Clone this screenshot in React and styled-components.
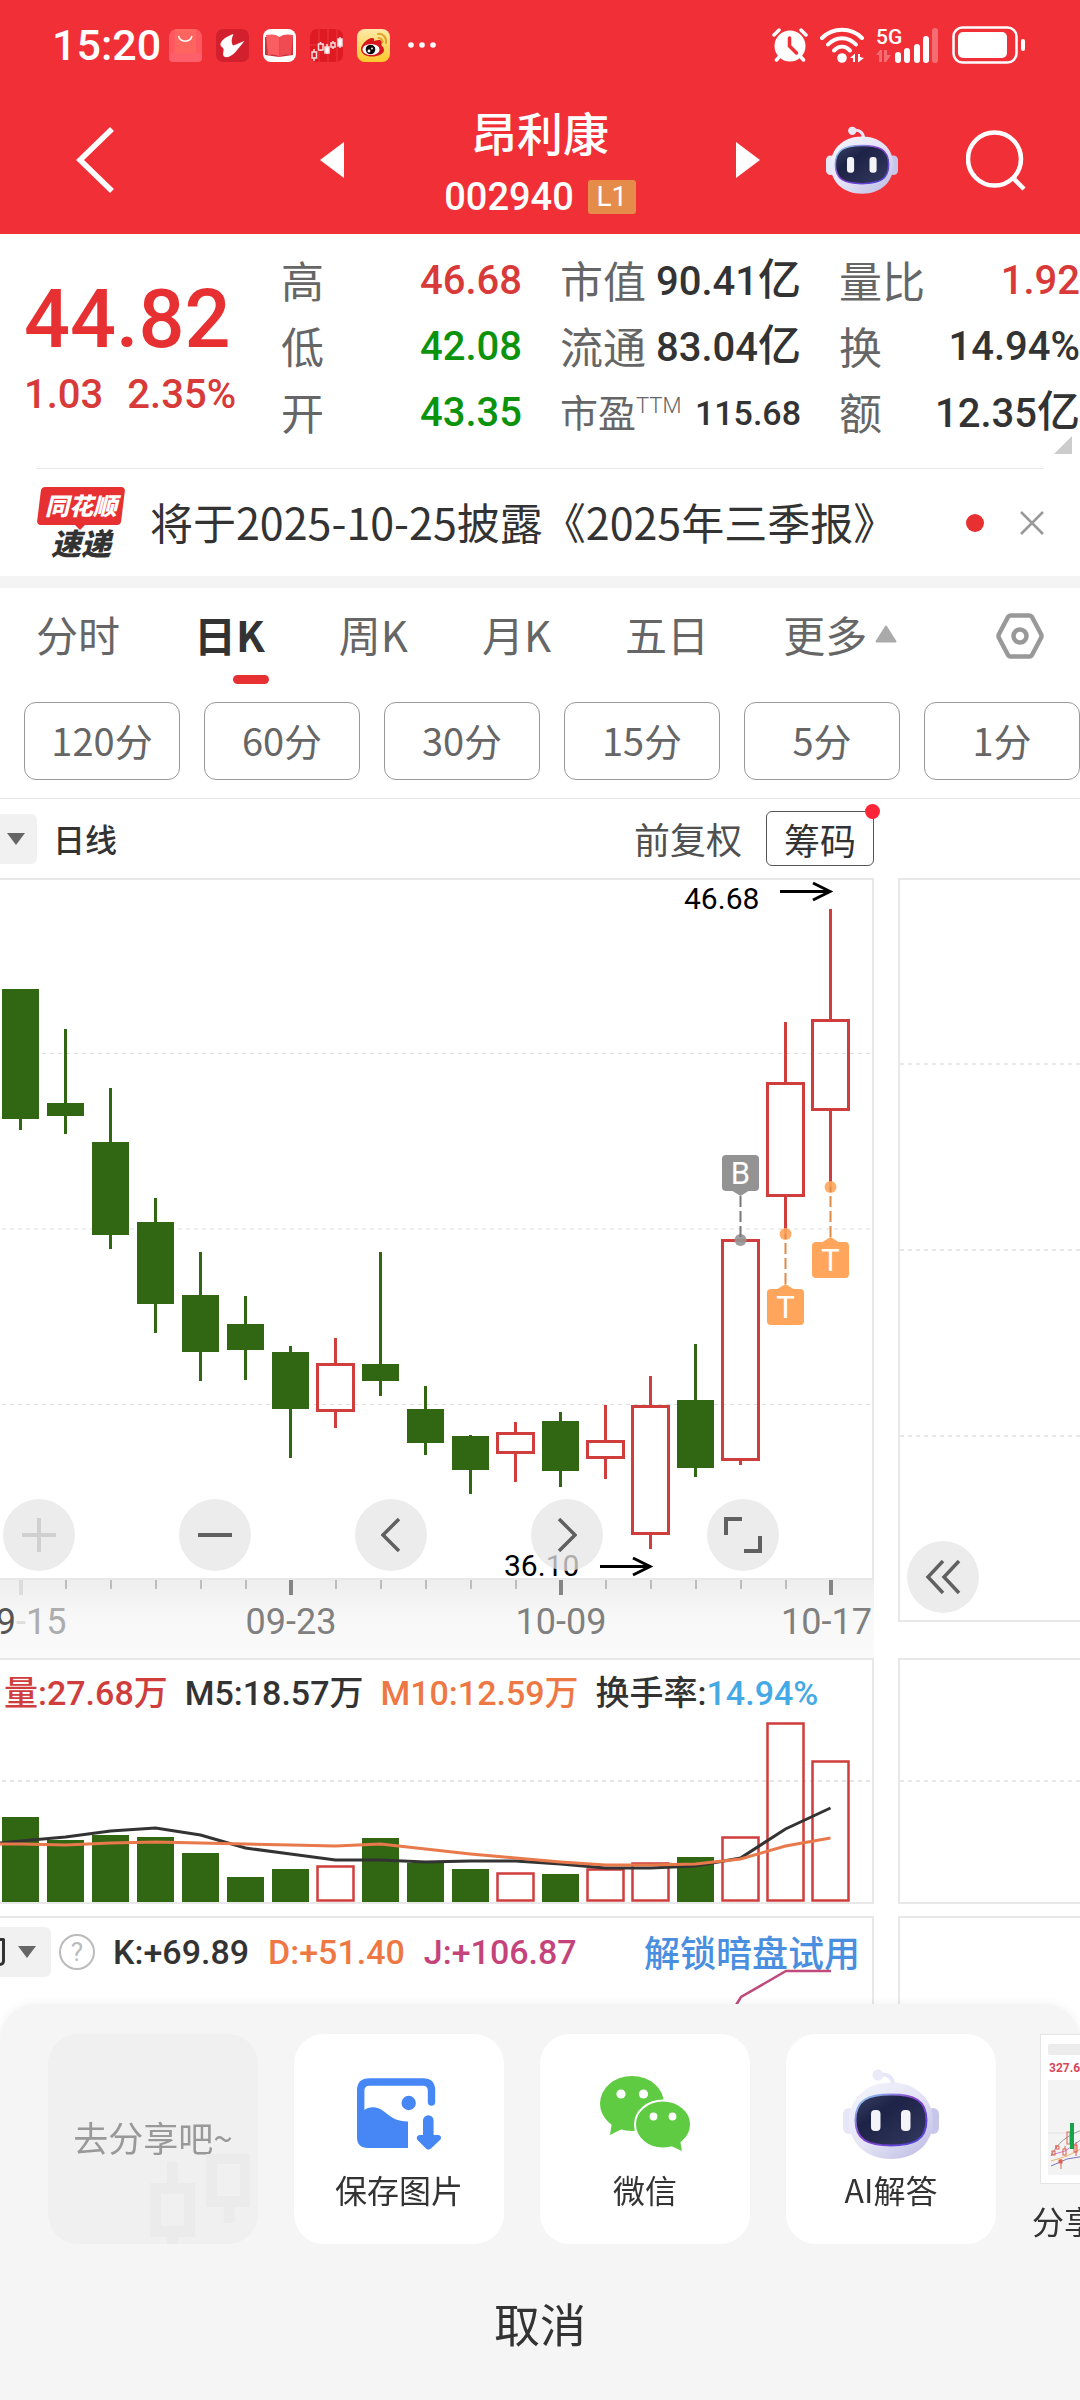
import React, { useState } from "react";
import styled, { createGlobalStyle } from "styled-components";

const CJK = `"Noto Sans CJK SC", "Noto Sans", sans-serif`;
const NUM = `Roboto, "Noto Sans CJK SC", sans-serif`;

const GREEN = "#316613";
const RED = "#cf3d3c";

// one entry per trading day: high, body top, body bottom, low (chart units)
const candles = [
  [110, 110, 240, 251],
  [150, 224, 237, 255],
  [209, 263, 356, 370],
  [319, 343, 425, 454],
  [373, 416, 473, 502],
  [417, 445, 471, 501],
  [467, 473, 530, 579],
  [459, 484, 533, 549, true],
  [373, 485, 502, 517],
  [507, 530, 564, 576],
  [556, 557, 591, 615],
  [543, 553, 575, 603, true],
  [533, 542, 592, 608],
  [526, 561, 580, 600, true],
  [497, 526, 656, 670, true],
  [465, 521, 589, 598],
  [360, 360, 582, 586, true],
  [143, 203, 318, 355, true],
  [30, 140, 232, 308, true],
];

const volumes = [
  99, 122, 117, 119, 135, 159, 151, 147, 120, 145, 151, 154, 156, 150, 144, 139,
  118, 4, 42,
];
const m5 = [
  123, 119, 113, 110, 117, 130, 136, 142, 142, 144, 143, 143, 146, 150, 150,
  148, 140, 111, 90,
];
const m10 = [
  126, 127, 125, 124, 125, 126, 127, 128, 126, 131, 136, 140, 144, 147, 147,
  146, 141, 128, 120,
];

const quotes = [
  [
    { label: "高", value: "46.68", color: "#d83a3a" },
    { label: "低", value: "42.08", color: "#0c930c" },
    { label: "开", value: "43.35", color: "#0c930c" },
  ],
  [
    { label: "市值", value: "90.41", unit: "亿" },
    { label: "流通", value: "83.04", unit: "亿" },
    { label: "市盈", sup: "TTM", value: "115.68", small: true },
  ],
  [
    { label: "量比", value: "1.92", color: "#d83a3a" },
    { label: "换", value: "14.94%" },
    { label: "额", value: "12.35", unit: "亿" },
  ],
];

const tabs = ["分时", "日K", "周K", "月K", "五日", "更多"];
const minutes = ["120分", "60分", "30分", "15分", "5分", "1分"];

const centerX = (i) => 20.5 + i * 45;

/* ---------- icons ---------- */

const Robot = ({ width, height, id }) => (
  <svg width={width} height={height} viewBox="0 0 96 90">
    <defs>
      <linearGradient id={`${id}-head`} x1="0" y1="0" x2="1" y2="1">
        <stop offset="0" stopColor="#f6f6fd" />
        <stop offset="0.5" stopColor="#e4e4f6" />
        <stop offset="1" stopColor="#b9b8e2" />
      </linearGradient>
      <linearGradient id={`${id}-rim`} x1="0" y1="0" x2="1" y2="1">
        <stop offset="0" stopColor="#8fe0f5" />
        <stop offset="0.45" stopColor="#8a3fd0" />
        <stop offset="1" stopColor="#4a48d8" />
      </linearGradient>
      <linearGradient id={`${id}-face`} x1="0" y1="0" x2="1" y2="1">
        <stop offset="0" stopColor="#3a4066" />
        <stop offset="0.35" stopColor="#1d2346" />
        <stop offset="1" stopColor="#34395f" />
      </linearGradient>
    </defs>
    <path
      d="M36 6 C44 4 50 8 50 16"
      fill="none"
      stroke="#e6e6f7"
      strokeWidth="4"
    />
    <circle cx="35" cy="6" r="5.5" fill="#e9e9f8" />
    <rect x="0" y="39" width="12" height="26" rx="6" fill="#e6e6f6" />
    <rect x="84" y="39" width="12" height="26" rx="6" fill="#c6c6ea" />
    <path
      d="M48 13.500C74 13.500 90 31 90 52S74 90 48 90S6 73 6 52S22 13.500 48 13.500Z"
      fill={`url(#${id}-head)`}
    />
    <path
      d="M12.500 51C12.500 31 25 25.500 48 25.500S83.500 31 83.500 51S71 76.500 48 76.500S12.500 71 12.500 51Z"
      fill={`url(#${id}-face)`}
      stroke={`url(#${id}-rim)`}
      strokeWidth="2"
    />
    <rect x="28" y="41" width="9.500" height="21" rx="4" fill="#f3f3f8" />
    <rect x="58" y="41" width="9.500" height="21" rx="4" fill="#f3f3f8" />
  </svg>
);

const BagIcon = () => (
  <svg width="33" height="33" viewBox="0 0 33 33">
    <rect width="33" height="33" rx="8" fill="#fe5961" />
    <rect x="6" width="21" height="24" fill="#ff655f" />
    <rect y="24" width="33" height="9" rx="4" fill="#ff5f6b" />
    <path d="M9.500 7a7 7 0 0 0 13.500 0" fill="none" stroke="#fff" strokeWidth="1.500" />
  </svg>
);

const BirdIcon = () => (
  <svg width="33" height="33" viewBox="0 0 33 33">
    <rect width="33" height="33" rx="7" fill="#d3202e" />
    <path
      d="M17.500 5C12 7 6 10 4.500 14.500c-.5 3.500 2.500 3.500 3 5.500.5 3-1.500 5 .5 7.500 4 2 8-1 11.500-4.500L28.500 12c-4 1-7 3.500-11.500 4.500-2-3.500-1.500-7 .5-11.500z"
      fill="#fff"
    />
  </svg>
);

const BookIcon = () => (
  <svg width="33" height="33" viewBox="0 0 33 33">
    <rect width="33" height="33" rx="8" fill="#fff" />
    <path d="M2 8v18l14 2 14-2V8z" fill="#c9333c" />
    <path d="M3 6c5-1 10-1 13.500 2v20C13 25 9 25 5 26z" fill="#fa5d62" />
    <path d="M30 6c-5-1-10-1-13.500 2v20C20 25 24 25 28 26z" fill="#f04b53" />
  </svg>
);

const StockIcon = () => (
  <svg width="33" height="33" viewBox="0 0 33 33">
    <rect width="33" height="33" rx="7" fill="#df1a22" />
    <path d="M9 0v33M18 0v33M27 0v33M0 16h33" stroke="#e8383f" strokeWidth="1" />
    <g fill="none" stroke="#f8dede" strokeWidth="1.500">
      <path d="M4 20v12M10.500 13v9M17 15v10M23 12v8M30 8v11" />
      <rect x="2" y="23" width="4.500" height="6" fill="#df1a22" />
      <rect x="8.500" y="15" width="4.500" height="6" fill="#df1a22" />
      <rect x="15" y="18" width="4" height="6" fill="#fff" />
      <rect x="21" y="14" width="4" height="4" fill="#df1a22" />
      <rect x="28" y="10" width="4" height="7" fill="#fff" />
    </g>
  </svg>
);

const WeiboIcon = () => (
  <svg width="33" height="33" viewBox="0 0 33 33">
    <defs>
      <linearGradient id="weibo-bg" x1="0" y1="0" x2="0" y2="1">
        <stop offset="0" stopColor="#fdeaa9" />
        <stop offset="1" stopColor="#fbc92c" />
      </linearGradient>
    </defs>
    <rect width="33" height="33" rx="8" fill="url(#weibo-bg)" />
    <path
      d="M4 20c0-5 8-12 12-11 2 1 1 3 1 3s7-3 8 1c0 2-1 3-1 3s3 2 3 5c0 4-6 6.500-12 6.500S4 25 4 20z"
      fill="#d8161c"
    />
    <ellipse cx="14" cy="20.500" rx="8.500" ry="5.500" fill="#fff" />
    <circle cx="13.500" cy="20.500" r="4.800" fill="#0c0c0c" />
    <circle cx="12" cy="22" r="1.400" fill="#fff" />
    <circle cx="15" cy="19.500" r="0.900" fill="#fff" />
    <path
      d="M21 5c5-1 9 4 8 9M21.500 9c2.500 0 4.500 2 4 4.500"
      fill="none"
      stroke="#e0a32a"
      strokeWidth="2"
      strokeLinecap="round"
    />
  </svg>
);

const AlarmIcon = () => (
  <svg width="36" height="34" viewBox="0 0 36 34">
    <g stroke="#fff" strokeWidth="3.500" strokeLinecap="round">
      <path d="M2 7l5-5M34 7l-5-5M8 28l-3.500 4M28 28l3.500 4" />
    </g>
    <circle cx="18" cy="18" r="15.500" fill="#fff" />
    <path
      d="M17.500 10v8l7 7"
      fill="none"
      stroke="#f12f37"
      strokeWidth="3.500"
      strokeLinecap="round"
    />
  </svg>
);

const WifiIcon = () => (
  <svg width="44" height="36" viewBox="0 0 44 36">
    <g fill="none" stroke="#fff" strokeWidth="4" strokeLinecap="round">
      <path d="M2 11C13 0 31 0 42 11" />
      <path d="M8 17.500C16 9 28 9 36 17.500" />
      <path d="M14 23.500c5-5 11-5 16 0" />
    </g>
    <circle cx="22" cy="31" r="4.800" fill="#fff" />
    <path d="M30 31l5-4.500V35h-2v-4zM44 31l-6 4.500V27h2v3z" fill="#fff" />
  </svg>
);

const SignalIcon = () => (
  <svg width="64" height="44" viewBox="0 -4 64 44">
    <text x="0" y="17" fontFamily="Roboto" fontWeight="500" fontSize="21" fill="#fff">
      5G
    </text>
    <path
      d="M0 28l4-5h2v12H3v-7zM15 28l-5 7H8V23h3v5z"
      fill="#fff"
      fillOpacity="0.3"
    />
    <g fill="#fff">
      <rect x="19" y="25" width="6" height="11" rx="3" />
      <rect x="28" y="21" width="6" height="15" rx="3" />
      <rect x="38" y="17" width="6" height="19" rx="3" />
      <rect x="47" y="9" width="6" height="27" rx="3" />
      <rect x="56" y="1" width="6" height="35" rx="3" fillOpacity="0.3" />
    </g>
  </svg>
);

const BatteryIcon = () => (
  <svg width="74" height="38" viewBox="0 0 74 38">
    <rect x="1.500" y="1.500" width="63" height="35" rx="9" fill="none" stroke="#fff" strokeWidth="2.500" />
    <rect x="6" y="6" width="49" height="26" rx="5" fill="#fff" />
    <rect x="69" y="13" width="4" height="12" rx="2" fill="#fff" />
  </svg>
);

const SaveIcon = () => (
  <svg width="84" height="72" viewBox="0 0 84 72">
    <path
      d="M74.500 24V12.500Q74.500 4 66 4H12.500Q3.700 4 3.700 12.500V40"
      fill="none"
      stroke="#4787f5"
      strokeWidth="7.400"
      strokeLinecap="round"
    />
    <path
      d="M0 30L7.400 32C12 28.500 20 28 27 33.500C35 40 40 43.500 51 43.500V70H11Q0 70 0 59Z"
      fill="#4787f5"
    />
    <circle cx="51.700" cy="25" r="7.200" fill="#4787f5" />
    <path
      d="M66 42.500a5.300 5.300 0 0 1 10.600 0V57H81c3 0 4 3 2 5L74 70.500c-2 1.500-3.500 1.500-5 0L60.500 62c-1.500-2-.5-5 2.500-5h3z"
      fill="#4787f5"
    />
  </svg>
);

const WechatIcon = () => (
  <svg width="91" height="76" viewBox="0 0 91 76">
    <ellipse cx="32" cy="27.500" rx="32" ry="27.500" fill="#5fcb43" />
    <path d="M12 46l-2 13 12-6z" fill="#5fcb43" />
    <circle cx="21" cy="18" r="4.600" fill="#fff" />
    <circle cx="43.500" cy="18" r="4.600" fill="#fff" />
    <ellipse cx="63" cy="48.500" rx="28" ry="24" fill="#5fcb43" stroke="#fff" strokeWidth="2" />
    <path d="M80 64l2 11-13-6z" fill="#5fcb43" />
    <circle cx="53.500" cy="40.500" r="3.900" fill="#fff" />
    <circle cx="72.500" cy="40.500" r="3.900" fill="#fff" />
  </svg>
);

const Thumbnail = () => (
  <svg width="114" height="150" viewBox="0 0 114 150">
    <rect x="0.500" y="0.500" width="113" height="149" fill="#fff" stroke="#e4e4e4" />
    <rect x="8" y="10" width="98" height="11" rx="2" fill="#ececec" />
    <text x="9" y="38" fontFamily="Roboto" fontWeight="700" fontSize="12" fill="#d8475a">
      327.61
    </text>
    <rect x="8" y="46" width="98" height="95" fill="#f3f3f3" />
    <path d="M8 99h98" stroke="#e2e2e2" />
    <path d="M11 122c6-12 15-21 34-27" fill="none" stroke="#999" />
    <path d="M11 121l14-4 20-14" fill="none" stroke="#c77fd0" />
    <path d="M11 127l16-5 18-9" fill="none" stroke="#eab66f" />
    <path d="M11 132l16-7 18-3" fill="none" stroke="#7a78b8" />
    <g fill="none" stroke="#e0604f">
      <path d="M16 111v3M25 112v3M21 125v10M36 108v14" />
      <rect x="12" y="117" width="3" height="4" />
      <rect x="16" y="112" width="3" height="3" />
      <rect x="23" y="115" width="3" height="6" />
      <rect x="27" y="98" width="3" height="12" />
      <rect x="34" y="111" width="3" height="7" />
      <rect x="19" y="126" width="3" height="3" fill="#e0604f" />
    </g>
    <path d="M32 89v26" stroke="#16a34a" strokeWidth="4" />
  </svg>
);

/* ---------- charts ---------- */

const Marker = ({ x, dotY, boxY, letter, color, line }) => {
  const below = boxY > dotY;
  const edge = below ? boxY : boxY + 36;
  const tip = below ? boxY - 5 : boxY + 41;
  return (
    <g>
      <circle cx={x} cy={dotY} r="6" fill={color} fillOpacity="0.9" />
      <path d={`M${x} ${tip}V${dotY}`} stroke={line} strokeWidth="2" strokeDasharray="11 4" />
      <path d={`M${x - 8} ${edge}L${x} ${tip}L${x + 8} ${edge}z`} fill={color} />
      <rect x={x - 18.5} y={boxY} width="37" height="36" rx="4" fill={color} />
      <text x={x} y={boxY + 29} textAnchor="middle" fontSize="31" fill="#fff">
        {letter}
      </text>
    </g>
  );
};

const PriceChart = () => (
  <ChartSvg viewBox="0 -1 874 780">
    <defs>
      <linearGradient id="axis-bg" x1="0" y1="0" x2="0" y2="1">
        <stop offset="0" stopColor="#eeeeee" />
        <stop offset="0.5" stopColor="#f8f8f8" />
        <stop offset="1" stopColor="#fafafa" />
      </linearGradient>
    </defs>
    <rect x="0" y="701" width="874" height="78" fill="url(#axis-bg)" />
    <path d="M0 0H873V700H0" fill="none" stroke="#e8e8e8" strokeWidth="2" />
    <path
      d="M2 174.500H872M2 350H872M2 525.500H872"
      stroke="#dedede"
      strokeWidth="1"
      strokeDasharray="4 4"
    />
    {candles.map(([high, top, bottom, low, up], i) => {
      const x = centerX(i);
      return up ? (
        <g key={i} fill="none" stroke={RED} strokeWidth="3">
          <path d={`M${x} ${high}V${top}M${x} ${bottom}V${low}`} />
          <rect x={x - 18} y={top + 1.5} width="36" height={bottom - top - 3} />
        </g>
      ) : (
        <g key={i} fill={GREEN}>
          <rect x={x - 1.5} y={high} width="3" height={low - high} />
          <rect x={x - 18.5} y={top} width="37" height={bottom - top} />
        </g>
      );
    })}
    <g fontFamily="Roboto" fill="#fff">
      <Marker x={740.5} dotY={361} boxY={276} letter="B" color="#939393" line="#777" />
      <Marker x={785.5} dotY={355} boxY={410} letter="T" color="#ffa65c" line="#e08a48" />
      <Marker x={830.5} dotY={308} boxY={363} letter="T" color="#ffa65c" line="#e08a48" />
    </g>
    <g fontFamily="Roboto" fontSize="30" fill="#000">
      <text x="684" y="30">46.68</text>
      <text x="504" y="697">36.10</text>
    </g>
    <g fill="none" stroke="#000" strokeWidth="3">
      <path d="M780 12.500H830M813 4L830 12.500L813 21" />
      <path d="M600 687.500H650M633 679L650 687.500L633 696" />
    </g>
    {candles.map((_, i) => (
      <rect
        key={i}
        x={centerX(i) - (i % 6 ? 0.5 : 1.5)}
        y="701"
        width={i % 6 ? 2 : 4}
        height={i % 6 ? 9 : 15}
        fill={i === 0 ? "#dcdcdc" : i % 6 ? "#bdbdbd" : "#858585"}
      />
    ))}
    <g fontFamily="Roboto" fontSize="36" fill="#808080" textAnchor="middle">
      <text x="21" y="755">
        <tspan fill="#555">09</tspan>
        <tspan fill="#dedede">-</tspan>
        <tspan fill="#adadad">15</tspan>
      </text>
      <text x="291" y="755">09-23</text>
      <text x="561" y="755">10-09</text>
      <text x="872" y="755" textAnchor="end">10-17</text>
    </g>
  </ChartSvg>
);

const linePoints = (values) => values.map((v, i) => `${centerX(i)},${v}`).join(" ");

const VolumeChart = () => (
  <ChartSvg viewBox="0 0 872 184">
    <path d="M2 63H872" stroke="#e4e4e4" strokeWidth="2" strokeDasharray="4 4" />
    {volumes.map((top, i) =>
      candles[i][4] ? (
        <rect
          key={i}
          x={centerX(i) - 18}
          y={top + 1.5}
          width="36"
          height={181 - top}
          fill="none"
          stroke={RED}
          strokeWidth="2.500"
        />
      ) : (
        <rect key={i} x={centerX(i) - 18.5} y={top} width="37" height={184 - top} fill={GREEN} />
      )
    )}
    <g fill="none" strokeWidth="3">
      <polyline points={`0,125 ${linePoints(m5)}`} stroke="#333" />
      <polyline points={`0,126 ${linePoints(m10)}`} stroke="#e8794a" />
    </g>
  </ChartSvg>
);

/* ---------- page ---------- */

const App = () => {
  const [active, setActive] = useState("日K");

  return (
    <Page>
      <GlobalStyle />
      <Header>
        <StatusBar>
          <Clock>15:20</Clock>
          <AppIcons>
            <BagIcon />
            <BirdIcon />
            <BookIcon />
            <StockIcon />
            <WeiboIcon />
          </AppIcons>
          <svg width="28" height="6" viewBox="0 0 28 6" fill="#fff">
            <circle cx="3" cy="3" r="2.800" />
            <circle cx="14" cy="3" r="2.800" />
            <circle cx="25" cy="3" r="2.800" />
          </svg>
          <SystemIcons>
            <AlarmIcon />
            <WifiIcon />
            <SignalIcon />
            <BatteryIcon />
          </SystemIcons>
        </StatusBar>
        <NavBar>
          <NavSide>
            <IconButton aria-label="返回">
              <svg width="40" height="66" viewBox="0 0 40 66">
                <path d="M36 2L4 33L36 64" fill="none" stroke="#fff" strokeWidth="5.500" />
              </svg>
            </IconButton>
          </NavSide>
          <Switcher>
            <IconButton aria-label="上一只">
              <svg width="24" height="36" viewBox="0 0 24 36">
                <path d="M24 0V36L0 18z" fill="#fff" />
              </svg>
            </IconButton>
            <Title>
              <h1>昂利康</h1>
              <Code>
                002940 <Level>L1</Level>
              </Code>
            </Title>
            <IconButton aria-label="下一只">
              <svg width="24" height="36" viewBox="0 0 24 36">
                <path d="M0 0V36L24 18z" fill="#fff" />
              </svg>
            </IconButton>
          </Switcher>
          <NavSide $end>
            <IconButton aria-label="AI">
              <Robot id="nav" width={72} height={68} />
            </IconButton>
            <IconButton aria-label="搜索">
              <svg width="60" height="62" viewBox="0 0 60 62" fill="none" stroke="#fff" strokeWidth="4.500">
                <circle cx="28.500" cy="30" r="26.500" />
                <path d="M47 49L58 60" />
              </svg>
            </IconButton>
          </NavSide>
        </NavBar>
      </Header>

      <Quote>
        <PriceBlock>
          <Price>44.82</Price>
          <Change>
            <span>1.03</span>
            <span>2.35%</span>
          </Change>
        </PriceBlock>
        {quotes.map((column, i) => (
          <div key={i}>
            {column.map((item) => (
              <QuoteRow key={item.label}>
                <QuoteLabel $small={item.small}>
                  {item.label}
                  {item.sup && <sup>{item.sup}</sup>}
                </QuoteLabel>
                <QuoteValue $color={item.color} $small={item.small}>
                  {item.value}
                  {item.unit && <em>{item.unit}</em>}
                </QuoteValue>
              </QuoteRow>
            ))}
          </div>
        ))}
        <Corner />
      </Quote>

      <News>
        <Brand>
          <BrandTag>同花顺</BrandTag>
          <BrandName>速递</BrandName>
        </Brand>
        <NewsText href="#report">将于2025-10-25披露《2025年三季报》</NewsText>
        <NewsDot />
        <IconButton aria-label="关闭">
          <svg width="24" height="24" viewBox="0 0 24 24">
            <path d="M1 1L23 23M23 1L1 23" stroke="#999" strokeWidth="2.500" />
          </svg>
        </IconButton>
      </News>

      <Tabs>
        {tabs.map((tab) => (
          <Tab key={tab} $active={tab === active} onClick={() => setActive(tab)}>
            {tab}
            {tab === "更多" && (
              <svg width="22" height="18" viewBox="0 0 22 18">
                <path d="M11 1.500L20.500 16.500H1.500z" fill="#aaa" stroke="#aaa" strokeWidth="2" strokeLinejoin="round" />
              </svg>
            )}
          </Tab>
        ))}
        <SettingsButton aria-label="设置">
          <svg width="48" height="46" viewBox="0 0 48 46" fill="none" stroke="#999" strokeWidth="4.500">
            <path
              d="M14.500 2.500H33.500Q35 2.500 36 4L45 21Q46 23 45 25L36 42Q35 43.500 33.500 43.500H14.500Q13 43.500 12 42L3 25Q2 23 3 21L12 4Q13 2.500 14.500 2.500Z"
              strokeLinejoin="round"
            />
            <circle cx="24" cy="23" r="6.500" />
          </svg>
        </SettingsButton>
      </Tabs>

      <Pills>
        {minutes.map((m) => (
          <Pill key={m}>{m}</Pill>
        ))}
      </Pills>

      <Columns>
        <Toolbar>
          <DropButton aria-label="主图指标">
            <svg width="18" height="12" viewBox="0 0 18 12">
              <path d="M0 0H18L9 12z" fill="#666" />
            </svg>
          </DropButton>
          <ToolName>日线</ToolName>
          <AdjustButton>前复权</AdjustButton>
          <ChipButton>筹码</ChipButton>
        </Toolbar>
      </Columns>

      <Columns>
        <Overlay>
          <PriceChart />
          <Controls>
            <RoundButton aria-label="放大" disabled>
              <svg width="34" height="34" viewBox="0 0 34 34" stroke="#d0d0d0" strokeWidth="4">
                <path d="M17 0V34M0 17H34" />
              </svg>
            </RoundButton>
            <RoundButton aria-label="缩小">
              <svg width="34" height="34" viewBox="0 0 34 34" stroke="#606060" strokeWidth="4">
                <path d="M0 17H34" />
              </svg>
            </RoundButton>
            <RoundButton aria-label="左移">
              <svg width="20" height="34" viewBox="0 0 20 34" fill="none" stroke="#606060" strokeWidth="3.500">
                <path d="M18 1L2 17L18 33" />
              </svg>
            </RoundButton>
            <RoundButton aria-label="右移">
              <svg width="20" height="34" viewBox="0 0 20 34" fill="none" stroke="#606060" strokeWidth="3.500">
                <path d="M2 1L18 17L2 33" />
              </svg>
            </RoundButton>
            <RoundButton aria-label="全屏">
              <svg width="38" height="38" viewBox="0 0 38 38" fill="none" stroke="#606060" strokeWidth="4">
                <path d="M2 19V3H18M36 20V35H20" />
              </svg>
            </RoundButton>
          </Controls>
        </Overlay>
        <SidePanel>
          <ChartSvg viewBox="0 0 180 740">
            <path
              d="M0 184H180M0 370H180M0 556H180"
              stroke="#e8e8e8"
              strokeWidth="2"
              strokeDasharray="4 4"
            />
          </ChartSvg>
          <ExpandButton aria-label="展开">
            <svg width="36" height="34" viewBox="0 0 36 34" fill="none" stroke="#606060" strokeWidth="3.500">
              <path d="M18 1L3 17L18 33M34 1L19 17L34 33" />
            </svg>
          </ExpandButton>
        </SidePanel>
      </Columns>

      <Columns $bottom={12}>
        <Panel>
          <Legend>
            <Stat $color="#cf3d3c">量:27.68万</Stat>
            <Stat>M5:18.57万</Stat>
            <Stat $color="#ee7844">M10:12.59万</Stat>
            <Stat>
              换手率:<Stat $color="#45a9e6">14.94%</Stat>
            </Stat>
          </Legend>
          <VolumeChart />
        </Panel>
        <Panel $side>
          <ChartSvg viewBox="0 0 180 242">
            <path d="M0 121H180" stroke="#e8e8e8" strokeWidth="2" strokeDasharray="4 4" />
          </ChartSvg>
        </Panel>
      </Columns>

      <Columns $grow>
        <Panel $open>
          <KdjRow>
            <DropButton $wide aria-label="副图指标">
              <NameEdge />
              <svg width="18" height="12" viewBox="0 0 18 12">
                <path d="M0 0H18L9 12z" fill="#666" />
              </svg>
            </DropButton>
            <Help aria-label="说明">?</Help>
            <Stat>K:+69.89</Stat>
            <Stat $color="#ee7844">D:+51.40</Stat>
            <Stat $color="#c5437b">J:+106.87</Stat>
            <Unlock href="#unlock">解锁暗盘试用</Unlock>
          </KdjRow>
          <KdjLine viewBox="0 0 872 100">
            <polyline points="733,92 741,79 786,53 831,53" fill="none" stroke="#bf4a7b" strokeWidth="2.500" />
          </KdjLine>
        </Panel>
        <Panel $side $open />
      </Columns>

      <Sheet>
        <ShareRow>
          <HintCard>
            去分享吧~
            <Watermark width="100" height="90" viewBox="0 0 100 90" fill="none" stroke="#ebebeb" strokeWidth="11">
              <rect x="5.500" y="34.500" width="34" height="43" />
              <path d="M22.500 8V29M22.500 83V90" />
              <rect x="61.500" y="4.500" width="34" height="43" />
              <path d="M79 53V69" />
            </Watermark>
          </HintCard>
          <Card>
            <IconSlot>
              <SaveIcon />
            </IconSlot>
            保存图片
          </Card>
          <Card>
            <IconSlot>
              <WechatIcon />
            </IconSlot>
            微信
          </Card>
          <Card>
            <IconSlot>
              <Robot id="share" width={96} height={90} />
            </IconSlot>
            AI解答
          </Card>
          <ThumbCard>
            <Thumbnail />
            分享
          </ThumbCard>
        </ShareRow>
        <Cancel>取消</Cancel>
      </Sheet>
    </Page>
  );
};

const GlobalStyle = createGlobalStyle`
  * {
    box-sizing: border-box;
  }
  body {
    margin: 0;
    background: #fff;
    font-family: ${CJK};
    color: #333;
    overflow-x: hidden;
  }
  h1 {
    margin: 0;
  }
  button {
    font-family: inherit;
    color: inherit;
    background: none;
    border: 0;
    padding: 0;
    cursor: pointer;
  }
  a {
    text-decoration: none;
  }
  svg {
    display: block;
    flex-shrink: 0;
  }
`;

const Page = styled.main`
  display: flex;
  flex-direction: column;
  min-height: 100vh;
  overflow: hidden;
`;

const Header = styled.header`
  background: #f12f37;
  color: #fff;
`;

const StatusBar = styled.div`
  display: flex;
  align-items: center;
  height: 90px;
  padding: 0 54px 0 52px;
`;

const Clock = styled.span`
  font-family: ${NUM};
  font-size: 43px;
  font-weight: 500;
  margin-right: 8px;
`;

const AppIcons = styled.div`
  display: flex;
  gap: 14px;
  margin-right: 18px;
`;

const SystemIcons = styled.div`
  display: flex;
  align-items: center;
  gap: 12px;
  margin-left: auto;
`;

const NavBar = styled.nav`
  display: grid;
  grid-template-columns: 1fr 440px 1fr;
  align-items: center;
  height: 144px;
  padding-bottom: 4px;
`;

const NavSide = styled.div`
  display: flex;
  align-items: center;
  justify-content: ${(p) => (p.$end ? "flex-end" : "flex-start")};
  gap: 68px;
  padding: ${(p) => (p.$end ? "0 54px 0 0" : "0 0 0 76px")};
`;

const IconButton = styled.button`
  display: flex;
`;

const Switcher = styled.div`
  display: flex;
  align-items: center;
  justify-content: space-between;
`;

const Title = styled.div`
  display: flex;
  flex-direction: column;
  align-items: center;
  padding-top: 8px;
  h1 {
    font-size: 46px;
    font-weight: 500;
    line-height: 62px;
  }
`;

const Code = styled.div`
  display: flex;
  align-items: center;
  gap: 14px;
  margin-top: 4px;
  font-family: ${NUM};
  font-size: 38px;
  font-weight: 500;
  line-height: 62px;
`;

const Level = styled.span`
  width: 48px;
  height: 34px;
  border-radius: 3px;
  background: #e58c4a;
  font-size: 28px;
  font-weight: 400;
  line-height: 34px;
  text-align: center;
`;

const Quote = styled.section`
  position: relative;
  display: grid;
  grid-template-columns: 243px repeat(3, 1fr);
  column-gap: 38px;
  padding: 14px 0 22px;
`;

const PriceBlock = styled.div`
  padding: 30px 0 0 24px;
  font-family: ${NUM};
  font-weight: 500;
`;

const Price = styled.div`
  font-size: 81px;
  line-height: 84px;
  color: #e73032;
`;

const Change = styled.div`
  display: flex;
  gap: 24px;
  font-size: 40px;
  line-height: 66px;
  color: #d83a3a;
`;

const QuoteRow = styled.div`
  display: flex;
  align-items: center;
  justify-content: space-between;
  height: 66px;
  white-space: nowrap;
`;

const QuoteLabel = styled.span`
  font-size: ${(p) => (p.$small ? 38 : 43)}px;
  line-height: 62px;
  padding-bottom: 4px;
  color: #666;
  sup {
    font-family: Roboto, sans-serif;
    font-size: 22px;
    font-weight: 300;
    line-height: 0;
  }
`;

const QuoteValue = styled.span`
  font-family: ${NUM};
  font-size: ${(p) => (p.$small ? 34 : 40)}px;
  font-weight: 500;
  line-height: 66px;
  color: ${(p) => p.$color || "#333"};
  em {
    font-size: 43px;
    font-style: normal;
  }
`;

const Corner = styled.i`
  position: absolute;
  right: 8px;
  bottom: 14px;
  width: 18px;
  height: 18px;
  background: #ccc;
  clip-path: polygon(100% 0, 100% 100%, 0 100%);
`;

const News = styled.section`
  display: flex;
  align-items: center;
  height: 108px;
  margin: 0 36px;
  border-top: 1px solid #e8e8e8;
`;

const Brand = styled.div`
  width: 90px;
  margin-right: 24px;
  text-align: center;
  font-style: italic;
  font-weight: 900;
`;

const BrandTag = styled.div`
  position: relative;
  z-index: 0;
  height: 38px;
  font-size: 24px;
  line-height: 36px;
  color: #fff;
  &::before {
    content: "";
    position: absolute;
    z-index: -1;
    inset: 0 3px;
    border-radius: 4px;
    background: #e73032;
    transform: skewX(-7deg);
  }
  &::after {
    content: "";
    position: absolute;
    left: 38px;
    top: 37px;
    border: 6px solid transparent;
    border-top-color: #e73032;
    border-bottom: 0;
  }
`;

const BrandName = styled.div`
  font-size: 30px;
  line-height: 34px;
`;

const NewsText = styled.a`
  flex: 1;
  padding-bottom: 4px;
  font-size: 43px;
  line-height: 60px;
  color: #333;
  white-space: nowrap;
`;

const NewsDot = styled.i`
  width: 18px;
  height: 18px;
  margin-right: 36px;
  border-radius: 50%;
  background: #e73032;
`;

const Tabs = styled.div`
  display: flex;
  align-items: center;
  gap: 74px;
  height: 108px;
  padding: 0 36px;
  border-top: 12px solid #f4f4f4;
`;

const Tab = styled.button`
  position: relative;
  display: flex;
  align-items: center;
  gap: 8px;
  height: 96px;
  padding-bottom: 5px;
  font-size: 42px;
  font-weight: ${(p) => (p.$active ? 700 : 400)};
  color: ${(p) => (p.$active ? "#333" : "#666")};
  white-space: nowrap;
  &::after {
    content: "";
    display: ${(p) => (p.$active ? "block" : "none")};
    position: absolute;
    right: -4px;
    bottom: 0;
    width: 36px;
    height: 9px;
    border-radius: 5px;
    background: #e73032;
  }
`;

const SettingsButton = styled(IconButton)`
  margin-left: auto;
`;

const Pills = styled.div`
  display: flex;
  gap: 24px;
  padding: 18px 0 18px 24px;
  border-bottom: 1px solid #e4e4e4;
`;

const Pill = styled.button`
  flex: 1;
  height: 78px;
  padding-bottom: 3px;
  border: 1px solid #999;
  border-radius: 12px;
  font-size: 38px;
  color: #666;
`;

const Columns = styled.div`
  display: grid;
  grid-template-columns: minmax(0, 874fr) minmax(0, 182fr);
  column-gap: 24px;
  margin-bottom: ${(p) => p.$bottom || 0}px;
  flex-grow: ${(p) => (p.$grow ? 1 : 0)};
`;

const Toolbar = styled.div`
  display: flex;
  align-items: center;
  height: 79px;
`;

const DropButton = styled.button`
  display: flex;
  align-items: center;
  justify-content: space-between;
  flex-shrink: 0;
  width: ${(p) => (p.$wide ? 51 : 37)}px;
  height: 50px;
  padding-right: ${(p) => (p.$wide ? 15 : 12)}px;
  padding-left: ${(p) => (p.$wide ? 0 : 7)}px;
  border-radius: 0 6px 6px 0;
  background: #f1f1f1;
`;

/* tail of the indicator name, scrolled past the left side */
const NameEdge = styled.i`
  width: 5px;
  height: 28px;
  border: 3px solid #333;
  border-left: 0;
  border-radius: 0 2px 6px 0;
`;

const ToolName = styled.span`
  margin-left: 16px;
  padding-bottom: 2px;
  font-size: 32px;
  font-weight: 500;
`;

const AdjustButton = styled.button`
  margin-left: auto;
  padding-bottom: 2px;
  font-size: 36px;
  color: #505050;
`;

const ChipButton = styled.button`
  position: relative;
  width: 108px;
  height: 55px;
  margin-left: 24px;
  border: 1px solid #555;
  border-radius: 6px;
  font-size: 36px;
  line-height: 48px;
  &::after {
    content: "";
    position: absolute;
    top: -8px;
    right: -7px;
    width: 15px;
    height: 15px;
    border-radius: 50%;
    background: #ff2538;
  }
`;

const Overlay = styled.div`
  position: relative;
`;

const ChartSvg = styled.svg`
  width: 100%;
  height: auto;
`;

/* floats over the bottom of the candles */
const Controls = styled.div`
  position: absolute;
  left: 3px;
  right: 95px;
  bottom: 87px;
  display: flex;
  justify-content: space-between;
`;

const RoundButton = styled.button`
  display: flex;
  align-items: center;
  justify-content: center;
  width: 72px;
  height: 72px;
  border-radius: 50%;
  background: rgba(230, 230, 230, 0.75);
`;

const SidePanel = styled.div`
  position: relative;
  align-self: start;
  border: 2px solid #e8e8e8;
  border-right: 0;
`;

const ExpandButton = styled(RoundButton)`
  position: absolute;
  left: 7px;
  bottom: 7px;
`;

const Panel = styled.section`
  position: relative;
  border: 2px solid #e8e8e8;
  border-left-width: ${(p) => (p.$side ? 2 : 0)}px;
  border-right-width: ${(p) => (p.$side ? 0 : 2)}px;
  border-bottom-width: ${(p) => (p.$open ? 0 : 2)}px;
`;

const Legend = styled.div`
  display: flex;
  align-items: center;
  gap: 17px;
  height: 58px;
  padding: 8px 0 0 4px;
`;

const Stat = styled.span`
  font-family: ${NUM};
  font-size: 34px;
  font-weight: 500;
  line-height: 50px;
  color: ${(p) => p.$color || "#333"};
  white-space: nowrap;
`;

const KdjRow = styled.div`
  display: flex;
  align-items: center;
  gap: 19px;
  height: 68px;
`;

const Help = styled.button`
  width: 36px;
  height: 36px;
  margin: 0 -1px 0 -11px;
  border: 2px solid #bbb;
  border-radius: 50%;
  font-family: Roboto, sans-serif;
  font-size: 26px;
  line-height: 32px;
  color: #bbb;
`;

const Unlock = styled.a`
  margin-left: auto;
  padding: 0 12px 3px 0;
  font-size: 36px;
  font-weight: 500;
  line-height: 50px;
  color: #4a8fdf;
`;

const KdjLine = styled.svg`
  position: absolute;
  left: 0;
  top: 0;
  width: 100%;
  height: auto;
  pointer-events: none;
`;

const Sheet = styled.section`
  position: fixed;
  left: 0;
  right: 0;
  bottom: 0;
  padding-top: 30px;
  border-radius: 36px 36px 0 0;
  background: #f5f5f5;
  box-shadow: 0 0 12px rgba(0, 0, 0, 0.06);
`;

const ShareRow = styled.div`
  display: flex;
  gap: 36px;
  padding-left: 48px;
  overflow: hidden;
`;

const Card = styled.button`
  display: flex;
  flex-direction: column;
  align-items: center;
  flex-shrink: 0;
  width: 210px;
  height: 210px;
  padding-top: 26px;
  border-radius: 30px;
  background: #fff;
  font-size: 32px;
  line-height: 43px;
`;

const IconSlot = styled.span`
  display: flex;
  align-items: center;
  height: 108px;
`;

const HintCard = styled.div`
  position: relative;
  display: flex;
  align-items: center;
  justify-content: center;
  flex-shrink: 0;
  width: 210px;
  height: 210px;
  padding-bottom: 6px;
  border-radius: 30px;
  background: #f0f0f0;
  overflow: hidden;
  font-size: 35px;
  color: #999;
`;

const Watermark = styled.svg`
  position: absolute;
  right: 8px;
  bottom: 0;
`;

const ThumbCard = styled.button`
  flex-shrink: 0;
  width: 128px;
  font-size: 32px;
  line-height: 48px;
  text-align: left;
  svg {
    margin: 0 8px 12px;
  }
`;

const Cancel = styled.button`
  display: block;
  width: 100%;
  height: 156px;
  font-size: 46px;
`;

export default App;
